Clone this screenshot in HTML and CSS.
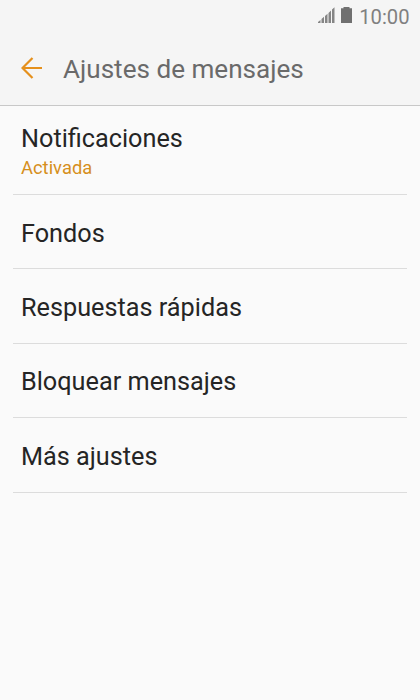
FILE: index.html
```html
<!DOCTYPE html>
<html lang="es">
<head>
<meta charset="utf-8">
<title>Ajustes de mensajes</title>
<link rel="stylesheet" href="styles.css">
</head>
<body>
<header class="top">
  <div class="status">
    <svg class="signal" width="17" height="16" viewBox="0 0 17 16"><path d="M0 16v-1l2.500-2v3zM3.500 16v-4l2.500-2.200V16zM7 16V9l2.500-2.300V16zM10.500 16V6L13 3.600V16zM14 16V2.600L16.500 0.300V16z"/></svg>
    <svg class="battery" width="11" height="16" viewBox="0 0 11 16"><path d="M2.500 0h6v1.200H11V16H0V1.200h2.500z"/></svg>
    <span class="clock">10:00</span>
  </div>
  <div class="bar">
    <svg class="back" width="22" height="22" viewBox="0 0 22 22"><path d="M21 11H2M11.500 1L1.500 11l10 10"/></svg>
    <h1 class="title">Ajustes de mensajes</h1>
  </div>
</header>
<main class="list">
  <div class="row first"><span class="label">Notificaciones</span><span class="sub">Activada</span></div>
  <div class="row"><span class="label">Fondos</span></div>
  <div class="row"><span class="label">Respuestas rápidas</span></div>
  <div class="row"><span class="label">Bloquear mensajes</span></div>
  <div class="row"><span class="label">Más ajustes</span></div>
</main>
</body>
</html>
```
FILE: styles.css
```css
body {
  margin: 0;
  height: 700px;
  overflow: hidden;
  background: #fafafa;
  font-family: Roboto, sans-serif;
  color: #252525;
}
.top {
  box-sizing: border-box;
  height: 106px;
  background: #f5f5f5;
  border-bottom: 1px solid #c8c8c8;
}
.status {
  display: flex;
  justify-content: flex-end;
  align-items: center;
  height: 32px;
  padding-right: 10.5px;
  color: #808080;
}
.signal { fill: #858585; margin-top: -2px; }
.battery { fill: #707070; margin: -2px 7px 0 6px; }
.clock { font-size: 20.2px; padding-top: 1px; }
.bar {
  display: flex;
  align-items: center;
  height: 73px;
  padding-left: 21px;
}
.back {
  fill: none;
  stroke: #e5901c;
  stroke-width: 2.2;
  margin-top: -1px;
}
.title {
  margin: 0 0 0 20px;
  font-size: 26.1px;
  font-weight: 400;
  color: #6a6a6a;
}
.list { padding: 0 13px; }
.row {
  box-sizing: border-box;
  display: flex;
  flex-direction: column;
  justify-content: center;
  height: 74.4px;
  padding: 4px 0 0 8px;
  border-bottom: 1px solid #dcdcdc;
}
.first { height: 89px; padding-top: 4px; }
.label { font-size: 25.25px; line-height: 32px; }
.sub { font-size: 18.4px; line-height: 26px; color: #d68f1c; }
```
